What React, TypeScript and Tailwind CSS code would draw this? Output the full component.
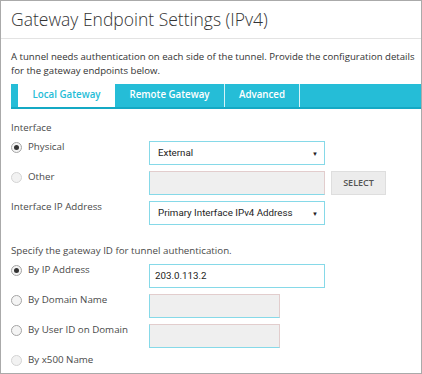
import React from "react";

const ui = { fontFamily: '"Open Sans", "Liberation Sans", sans-serif' };
const field = { fontFamily: 'Roboto, "Liberation Sans", Arial, sans-serif' };

function Radio({ checked, faded }: { checked?: boolean; faded?: boolean }) {
  return (
    <span
      className={`flex h-[11px] w-[11px] shrink-0 items-center justify-center rounded-full border ${
        faded ? "border-[#d4d4d4] bg-[#f2f2f2]" : "border-[#a5a5a5] bg-[#f4f4f4]"
      }`}
    >
      {checked && <span className="h-[5px] w-[5px] rounded-full bg-[#333]" />}
    </span>
  );
}

function Row({
  label,
  radio,
  checked,
  faded,
  children,
}: {
  label: string;
  radio?: boolean;
  checked?: boolean;
  faded?: boolean;
  children?: React.ReactNode;
}) {
  return (
    <div className="flex h-[30px] items-start">
      <div className="flex h-[12px] w-[138px] items-center gap-[6px] text-[9.75px] leading-[12px] text-[#4a4a4a]">
        {radio && <Radio checked={checked} faded={faded} />}
        <span>{label}</span>
      </div>
      {children}
    </div>
  );
}

function Select({ value }: { value: string }) {
  return (
    <div
      className="flex h-[24px] w-[176px] items-center justify-between border border-[#86d9e8] bg-white pl-[8px] pr-[6px] text-[9.75px] text-[#222]"
      style={field}
    >
      <span>{value}</span>
      <span className="text-[6px] text-[#222]">▼</span>
    </div>
  );
}

function Disabled({ w }: { w: string }) {
  return (
    <div
      className={`${w} h-[24px] border border-[#e2cdcd] border-b-[#86d9e8] border-l-[#86d9e8] bg-[#efefef]`}
    />
  );
}

export default function App() {
  return (
    <div
      className="h-[374px] w-[422px] overflow-hidden border border-[#aaaaaa] bg-white"
      style={ui}
    >
      <div className="h-[38px] border-b border-[#e3e3e3] pl-[10px] pt-[5px] text-[17.5px] font-light leading-[26px] text-[#333]">
        Gateway Endpoint Settings (IPv4)
      </div>
      <p className="pl-[10px] pr-[4px] pt-[11px] text-[9.6px] leading-[14px] text-[#333]">
        A tunnel needs authentication on each side of the tunnel. Provide the
        configuration details for the gateway endpoints below.
      </p>
      <div className="ml-[10px] mt-[6px] flex h-[25px] border-b-2 border-[#14a9c4] bg-[#25bdd7] pl-[7px] text-[9.75px] font-semibold">
        <div className="flex w-[97px] items-center justify-center bg-white text-[#25bdd7]">
          Local Gateway
        </div>
        <div className="flex w-[110px] items-center justify-center border-r border-[#d6f3f8] text-white">
          Remote Gateway
        </div>
        <div className="flex w-[75px] items-center justify-center border-r border-[#d6f3f8] text-white">
          Advanced
        </div>
        <div className="flex-1" />
      </div>

      <div className="pl-[10px] pt-[13px]">
        <div className="mb-[7px] text-[9.75px] leading-[12px] text-[#4a4a4a]">Interface</div>
        <Row label="Physical" radio checked>
          <Select value="External" />
        </Row>
        <Row label="Other" radio faded>
          <Disabled w="w-[176px]" />
          <div className="ml-[6px] flex h-[24px] w-[55px] items-center justify-center border border-[#dedede] bg-[#ececec] text-[9px] font-semibold text-[#555]">
            SELECT
          </div>
        </Row>
        <Row label="Interface IP Address">
          <Select value="Primary Interface IPv4 Address" />
        </Row>

        <div className="mb-[7px] mt-[14px] text-[9.75px] leading-[12px] text-[#4a4a4a]">
          Specify the gateway ID for tunnel authentication.
        </div>
        <Row label="By IP Address" radio checked>
          <div
            className="flex h-[24px] w-[176px] items-center border border-[#86d9e8] bg-white pl-[5px] text-[9.75px] text-[#222]"
            style={field}
          >
            203.0.113.2
          </div>
        </Row>
        <Row label="By Domain Name" radio>
          <Disabled w="w-[131px]" />
        </Row>
        <Row label="By User ID on Domain" radio>
          <Disabled w="w-[131px]" />
        </Row>
        <Row label="By x500 Name" radio faded />
      </div>
    </div>
  );
}
